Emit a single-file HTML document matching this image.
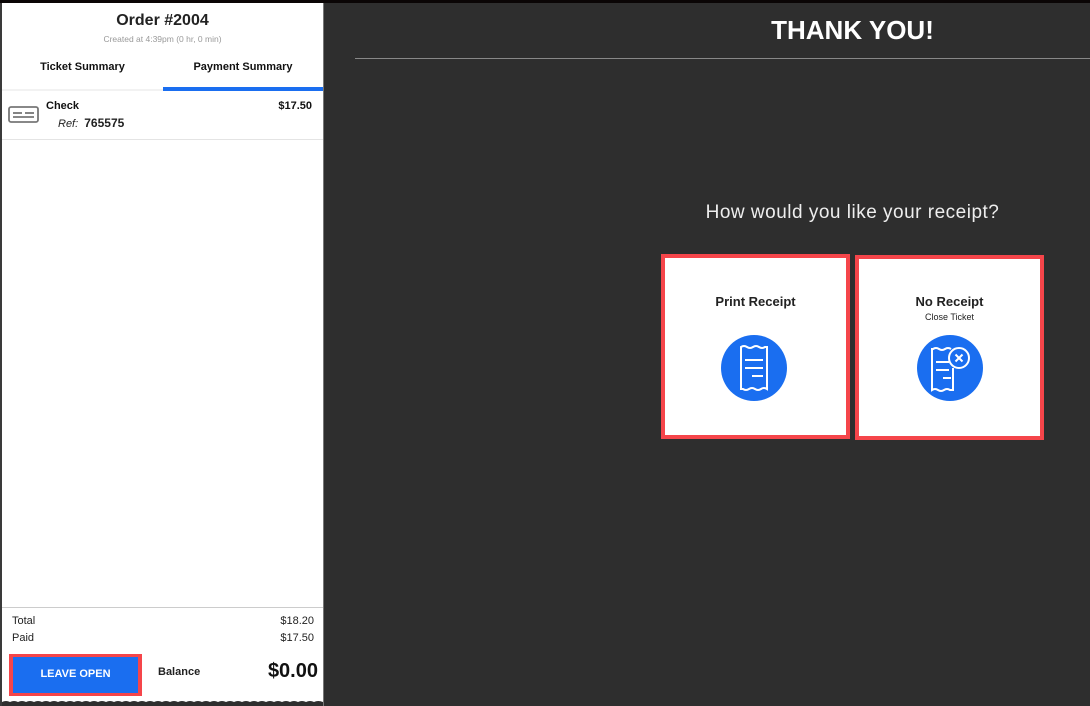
<!DOCTYPE html>
<html><head><style>
*{margin:0;padding:0;box-sizing:border-box}
body{width:1090px;height:706px;background:#2e2e2e;font-family:"Liberation Sans",sans-serif;position:relative;overflow:hidden}
.abs{position:absolute}
</style></head><body>
<div class="abs" style="left:0;top:0;width:1090px;height:3px;background:#0a0505"></div>
<div class="abs" style="left:0;top:3px;width:2px;height:703px;background:#3a3a3a"></div>
<div class="abs" style="left:2px;top:3px;width:321px;height:703px;background:#fff"></div>
<div class="abs" style="left:323px;top:3px;width:1px;height:703px;background:#777"></div>
<div class="abs" style="left:2px;top:12px;width:321px;text-align:center;font-size:16px;font-weight:bold;color:#222">Order #2004</div>
<div class="abs" style="left:2px;top:34px;width:321px;text-align:center;font-size:8.5px;color:#999">Created at 4:39pm (0 hr, 0 min)</div>
<div class="abs" style="left:2px;top:61px;width:161px;text-align:center;font-size:11px;font-weight:bold;color:#111">Ticket Summary</div>
<div class="abs" style="left:163px;top:61px;width:160px;text-align:center;font-size:11px;font-weight:bold;color:#111">Payment Summary</div>
<div class="abs" style="left:2px;top:89px;width:161px;height:2px;background:#f2f2f2"></div>
<div class="abs" style="left:163px;top:87px;width:160px;height:4px;background:#1a6ef0"></div>
<svg class="abs" style="left:8px;top:105px" width="32" height="20"><rect x="1" y="2" width="29" height="15" rx="2" fill="none" stroke="#777" stroke-width="1.8"/><line x1="5" y1="8" x2="14" y2="8" stroke="#777" stroke-width="1.8"/><line x1="5" y1="12" x2="26" y2="12" stroke="#777" stroke-width="1.8"/><line x1="17" y1="8" x2="26" y2="8" stroke="#777" stroke-width="1.8"/></svg>
<div class="abs" style="left:46px;top:100px;font-size:11px;font-weight:bold;color:#111">Check</div>
<div class="abs" style="left:58px;top:116px;font-size:11px;color:#222"><i>Ref:</i> <b style="font-size:12px;margin-left:3px">765575</b></div>
<div class="abs" style="left:250px;top:100px;width:62px;text-align:right;font-size:11px;font-weight:bold;color:#111">$17.50</div>
<div class="abs" style="left:2px;top:139px;width:321px;height:1px;background:#e4e4e4"></div>
<div class="abs" style="left:2px;top:607px;width:321px;height:1px;background:#ccc"></div>
<div class="abs" style="left:12px;top:615px;font-size:11px;color:#222">Total</div>
<div class="abs" style="left:12px;top:632px;font-size:11px;color:#222">Paid</div>
<div class="abs" style="left:250px;top:615px;width:64px;text-align:right;font-size:11px;color:#222">$18.20</div>
<div class="abs" style="left:250px;top:632px;width:64px;text-align:right;font-size:11px;color:#222">$17.50</div>
<div class="abs" style="left:9px;top:654px;width:133px;height:42px;background:#f5454a;padding:3px 4px"><div style="width:125px;height:36px;background:#1a6ef0;color:#fff;font-size:11px;font-weight:bold;text-align:center;line-height:34px">LEAVE OPEN</div></div>
<div class="abs" style="left:158px;top:666px;font-size:11px;font-weight:bold;color:#222">Balance</div>
<div class="abs" style="left:230px;top:660px;width:88px;text-align:right;font-size:20px;font-weight:bold;color:#111">$0.00</div>
<svg class="abs" style="left:2px;top:700px" width="321" height="6"><path d="M0 2 Q4 0 8 2 Q12 0 16 2 Q20 0 24 2 Q28 0 32 2 Q36 0 40 2 Q44 0 48 2 Q52 0 56 2 Q60 0 64 2 Q68 0 72 2 Q76 0 80 2 Q84 0 88 2 Q92 0 96 2 Q100 0 104 2 Q108 0 112 2 Q116 0 120 2 Q124 0 128 2 Q132 0 136 2 Q140 0 144 2 Q148 0 152 2 Q156 0 160 2 Q164 0 168 2 Q172 0 176 2 Q180 0 184 2 Q188 0 192 2 Q196 0 200 2 Q204 0 208 2 Q212 0 216 2 Q220 0 224 2 Q228 0 232 2 Q236 0 240 2 Q244 0 248 2 Q252 0 256 2 Q260 0 264 2 Q268 0 272 2 Q276 0 280 2 Q284 0 288 2 Q292 0 296 2 Q300 0 304 2 Q308 0 312 2 Q316 0 321 2 L321 6 L0 6Z" fill="#2e2e2e"/></svg>

<div class="abs" style="left:615px;top:15px;width:475px;text-align:center;font-size:26px;font-weight:bold;color:#fff">THANK YOU!</div>
<div class="abs" style="left:355px;top:58px;width:735px;height:1px;background:#888"></div>
<div class="abs" style="left:615px;top:202px;width:475px;text-align:center;font-size:19px;letter-spacing:0.5px;color:#eee">How would you like your receipt?</div>

<div class="abs" style="left:661px;top:254px;width:189px;height:185px;background:#fff;border:4px solid #f5454a"></div>
<div class="abs" style="left:661px;top:294px;width:189px;text-align:center;font-size:13px;font-weight:bold;color:#222">Print Receipt</div>
<svg class="abs" style="left:721px;top:335px" width="66" height="66"><circle cx="33" cy="33" r="33" fill="#1a6ef0"/><path d="M20 12 Q23 10 26 12 Q29 14 32 12 Q35 10 38 12 Q41 14 44 12 L46 12 L46 54 Q43 52 40 54 Q37 56 34 54 Q31 52 28 54 Q25 56 22 54 L20 54Z" fill="none" stroke="#fff" stroke-width="2"/><path d="M24 25H42M24 33H42M31 41H42" stroke="#fff" stroke-width="2"/></svg>

<div class="abs" style="left:855px;top:255px;width:189px;height:185px;background:#fff;border:4px solid #f5454a"></div>
<div class="abs" style="left:855px;top:294px;width:189px;text-align:center;font-size:13px;font-weight:bold;color:#222">No Receipt</div>
<div class="abs" style="left:855px;top:312px;width:189px;text-align:center;font-size:9px;color:#222">Close Ticket</div>
<svg class="abs" style="left:917px;top:335px" width="66" height="66"><circle cx="33" cy="33" r="33" fill="#1a6ef0"/><path d="M34 14 Q31 12 28 14 Q25 16 22 14 Q19 12 16 14 L15 14 L15 55 Q18 53 21 55 Q24 57 27 55 Q30 53 33 55 L36 55 L36 33" fill="none" stroke="#fff" stroke-width="2"/><path d="M19 27H32M19 35H32M26 43H34" stroke="#fff" stroke-width="2"/><circle cx="42" cy="23" r="10" fill="#1a6ef0" stroke="#fff" stroke-width="2"/><path d="M38.5 19.5L45.5 26.5M45.5 19.5L38.5 26.5" stroke="#fff" stroke-width="2"/></svg>
</body></html>
